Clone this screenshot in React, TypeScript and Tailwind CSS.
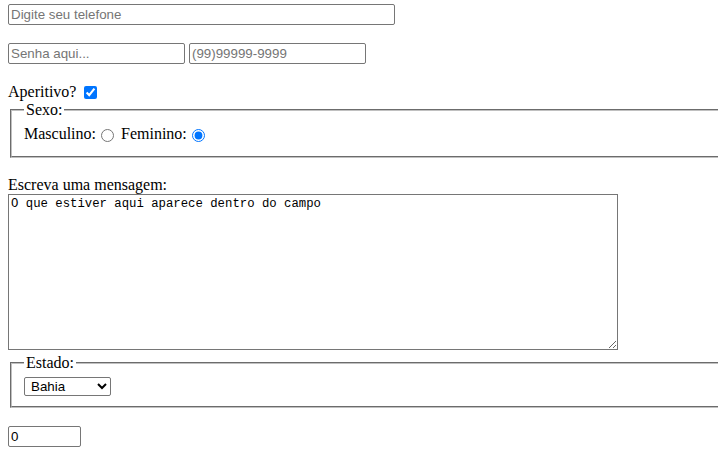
import React from "react";

const txt =
  "h-[21px] border border-[#767676] rounded-[2px] bg-white px-[2px] py-[1px] text-[13.33px] leading-[normal] text-black font-['Liberation_Sans',Arial,sans-serif] placeholder:text-[#757575] outline-none";

export default function App() {
  return (
    <div className="min-h-screen w-[718px] overflow-hidden bg-white pt-[4px] pl-[8px] font-['Liberation_Serif','Times_New_Roman',serif] text-[16px] leading-[normal] text-black">
      <div className="flex flex-col items-start">
        <input type="text" placeholder="Digite seu telefone" className={txt + " w-[387px]"} />

        <div className="mt-[18px] flex gap-[4px]">
          <input type="password" placeholder="Senha aqui..." className={txt + " w-[177px]"} />
          <input type="text" placeholder="(99)99999-9999" className={txt + " w-[177px]"} />
        </div>

        <div className="mt-[19px] flex h-[18px] items-start">
          <span>Aperitivo?</span>
          <input type="checkbox" defaultChecked className="ml-[8px] mt-[3px] h-[13px] w-[13px] accent-[#0075ff]" />
        </div>

        <fieldset className="mx-[2px] w-[800px] border-2 [border-style:groove] border-[#c0c0c0] px-[12px] pt-[5.6px] pb-[10px]">
          <legend className="px-[2px]">Sexo:</legend>
          <div className="flex h-[21.5px] items-start">
            <span>Masculino:</span>
            <input type="radio" name="sexo" className="ml-[5px] mr-[3px] mt-[4px] h-[13px] w-[13px] accent-[#0075ff]" />
            <span className="ml-[4px]">Feminino:</span>
            <input type="radio" name="sexo" defaultChecked className="ml-[5px] mr-[3px] mt-[4px] h-[13px] w-[13px] accent-[#0075ff]" />
          </div>
        </fieldset>

        <div className="mt-[17.5px]">Escreva uma mensagem:</div>
        <textarea
          defaultValue="O que estiver aqui aparece dentro do campo"
          className="h-[156px] w-[610px] border border-[#767676] bg-white p-[2px] text-[12.3px] leading-[normal] text-black font-['Liberation_Mono','DejaVu_Sans_Mono',monospace] outline-none"
        />

        <fieldset className="mx-[2px] mt-[4px] w-[800px] border-2 [border-style:groove] border-[#c0c0c0] px-[12px] pt-[5.6px] pb-[10px]">
          <legend className="px-[2px]">Estado:</legend>
          <div className="flex h-[19px] items-start">
            <select
              defaultValue="BA"
              className="h-[19px] w-[87px] rounded-[2px] border border-[#767676] bg-white pl-[2px] text-[13.33px] text-black font-['Liberation_Sans',Arial,sans-serif] outline-none"
            >
              <option value="BA">Bahia</option>
              <option value="SP">São Paulo</option>
              <option value="RJ">Rio de Janeiro</option>
            </select>
          </div>
        </fieldset>

        <input type="number" defaultValue={0} className={txt + " mt-[18px] h-[20px] w-[73px]"} />
      </div>
    </div>
  );
}
